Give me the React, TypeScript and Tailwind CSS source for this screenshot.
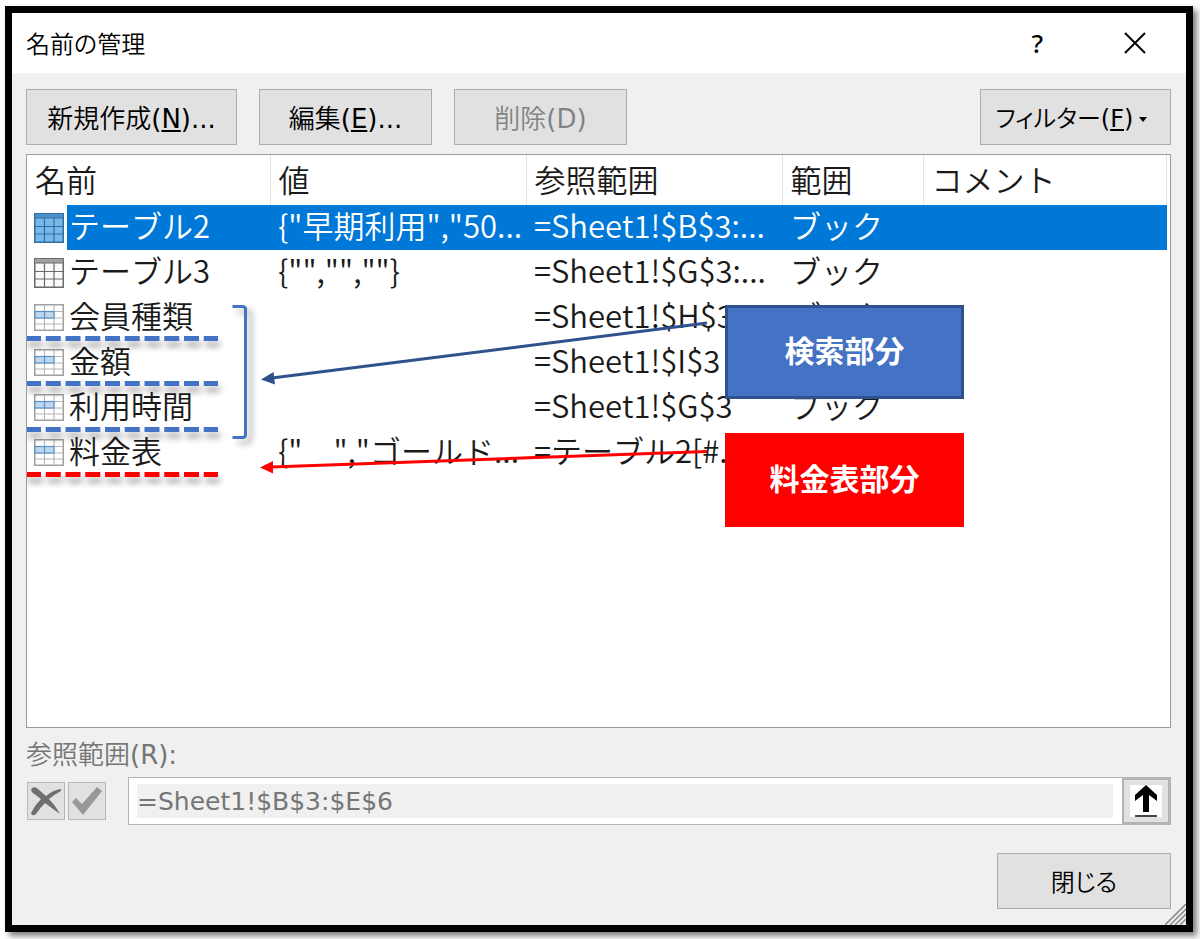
import React, { useState } from "react";
import clsx from "clsx";

interface NameItem {
  name: string;
  value: string;
  refersTo: string;
  kind: "table" | "range";
}

const items: NameItem[] = [
  { name: "テーブル2", value: '{"早期利用","50...', refersTo: "=Sheet1!$B$3:...", kind: "table" },
  { name: "テーブル3", value: '{"","",""}', refersTo: "=Sheet1!$G$3:...", kind: "table" },
  { name: "会員種類", value: "", refersTo: "=Sheet1!$H$3", kind: "range" },
  { name: "金額", value: "", refersTo: "=Sheet1!$I$3", kind: "range" },
  { name: "利用時間", value: "", refersTo: "=Sheet1!$G$3", kind: "range" },
  { name: "料金表", value: '{"　","ゴールド...', refersTo: "=テーブル2[#...", kind: "range" },
];

const columns = [
  { label: "名前", width: "w-[243px]" },
  { label: "値", width: "w-[256px]" },
  { label: "参照範囲", width: "w-[256px]" },
  { label: "範囲", width: "w-[141px]" },
  { label: "コメント", width: "" },
];

const buttonStyles =
  "h-14 border border-[#adadad] bg-[#e1e1e1] pt-1 text-black disabled:text-[#838383] whitespace-nowrap";

const TableIcon = ({ selected }: { selected: boolean }) => {
  const line = selected ? "#2f6ea5" : "#6a6a6a";
  return (
    <svg width="30" height="30" viewBox="0 0 30 30" className="shrink-0" aria-hidden="true">
      <rect x="0.75" y="0.75" width="28.5" height="28.5" fill={selected ? "#7ab8ea" : "#fbfbfb"} stroke={line} strokeWidth="1.5" />
      <rect x="1" y="1" width="28" height="4" fill={selected ? "#4a8fc7" : "#a3a3a3"} />
      <path d="M0 5H30M0 13.5H30M0 21H30M10.5 5V30M20 5V30" stroke={line} strokeWidth="1.2" />
    </svg>
  );
};

const RangeIcon = () => (
  <svg width="30" height="27" viewBox="0 0 30 27" className="shrink-0" aria-hidden="true">
    <rect x="0.75" y="0.75" width="28.5" height="25.5" fill="#fff" stroke="#a0a0a0" strokeWidth="1.5" />
    <path d="M1 7.5H29M1 14H29M1 20H29M10.5 1V26M20 1V26" stroke="#b5b5b5" strokeWidth="1.1" />
    <rect x="1" y="7.5" width="19" height="6.5" fill="#bdd7ee" stroke="#5b92c6" strokeWidth="1.2" />
    <path d="M10.5 7.5V14" stroke="#5b92c6" strokeWidth="1.2" />
  </svg>
);

// access key shown after a button caption
const Hotkey = ({ letter, more }: { letter: string; more?: boolean }) => (
  <span className="font-normal">
    (<u className="underline-offset-2">{letter}</u>){more && "..."}
  </span>
);

// underlines, bracket and arrows drawn over the list
const Annotations = () => (
  <div className="pointer-events-none absolute left-0 top-0">
    <svg width="700" height="350" viewBox="0 0 700 350" fill="none" aria-hidden="true">
      <g className="drop-shadow-[2px_6px_3px_rgba(0,0,0,0.35)]" strokeWidth="5" strokeDasharray="15 4.75">
        <path d="M-1 183.5H191" stroke="#4472c4" />
        <path d="M-1 228.5H191" stroke="#4472c4" />
        <path d="M-1 274.5H191" stroke="#4472c4" />
        <path d="M-1 319.5H191" stroke="#ff0000" />
      </g>
      <path
        d="M205.500 151.500H215Q218.500 151.500 218.500 154V280Q218.500 282.500 215 282.500H205.500"
        stroke="#4472c4"
        strokeWidth="3"
        className="drop-shadow-[5px_5px_3px_rgba(0,0,0,0.35)]"
      />
      <path d="M680 168L245 223" stroke="#2f528f" strokeWidth="3" />
      <path d="M234 224.500L246.500 217L248 229.500Z" fill="#2f528f" />
      <path d="M680 296.500L245 312" stroke="#ff0000" strokeWidth="3" />
      <path d="M233 312.500L246 306V318.500Z" fill="#ff0000" />
    </svg>
    <div className="absolute left-[698px] top-[150px] flex h-[94px] w-[239px] items-center justify-center border-[3px] border-[#2f528f] bg-[#4472c4] pb-[6px] text-[30px] font-bold text-white">
      検索部分
    </div>
    <div className="absolute left-[698px] top-[278px] flex h-[94px] w-[239px] items-center justify-center bg-[#ff0000] pb-[6px] text-[30px] font-bold text-white">
      料金表部分
    </div>
  </div>
);

const App = () => {
  const [selected, setSelected] = useState(0);

  return (
    <div className="flex min-h-screen flex-col bg-white pb-[7px] pl-[5px] pr-[7px] pt-[6px] font-['DejaVu_Sans','Noto_Sans_CJK_JP',sans-serif] text-[26px] leading-9">
      <main className="relative flex flex-1 flex-col border-[7px] border-black bg-[#f0f0f0] shadow-[4px_4px_6px_rgba(0,0,0,0.5)]">
        {/* title bar */}
        <header className="flex h-[60px] items-center justify-between bg-white pl-[14px] pr-[39px]">
          <h1 className="font-['Noto_Sans_CJK_JP',sans-serif] text-[24px] font-[350] [font-feature-settings:'palt']">
            名前の管理
          </h1>
          <div className="flex items-center gap-20">
            <button type="button" aria-label="ヘルプ" className="font-['Noto_Sans',sans-serif] text-[26px] font-medium">
              ?
            </button>
            <button type="button" aria-label="閉じる">
              <svg width="24" height="24" viewBox="0 0 24 24" stroke="#000" strokeWidth="2" aria-hidden="true">
                <path d="M2 2L22 22M22 2L2 22" />
              </svg>
            </button>
          </div>
        </header>

        <div className="flex flex-1 flex-col pb-4 pl-[14px] pr-[15px] pt-4">
          {/* toolbar */}
          <div className="mb-[9px] flex items-center font-[350]">
            <button type="button" className={clsx(buttonStyles, "mr-[22px] w-[211px]")}>
              新規作成
              <Hotkey letter="N" more />
            </button>
            <button type="button" className={clsx(buttonStyles, "mr-[22px] w-[173px]")}>
              編集
              <Hotkey letter="E" more />
            </button>
            <button type="button" disabled className={clsx(buttonStyles, "w-[173px]")}>
              削除<span className="font-normal">(D)</span>
            </button>
            <button
              type="button"
              className={clsx(buttonStyles, "ml-auto flex w-[191px] items-center justify-center gap-[6px] pr-2")}
            >
              <span className="text-[24px] [font-feature-settings:'palt']">
                フィルター
                <Hotkey letter="F" />
              </span>
              <svg width="8" height="5" viewBox="0 0 8 5" aria-hidden="true">
                <path d="M0 0H8L4 5Z" />
              </svg>
            </button>
          </div>

          {/* name list */}
          <div className="relative flex-1 border border-[#9a9aa5] bg-white pr-[3px] font-['Noto_Sans_CJK_JP',sans-serif] text-[31px] font-[350] text-[#1a1a1a] [font-kerning:none]">
            <table className="w-full table-fixed border-collapse">
              <thead>
                <tr className="h-[50px]">
                  {columns.map((column) => (
                    <th
                      key={column.label}
                      scope="col"
                      className={clsx("border-r border-[#e3e3e3] p-0 pb-[2px] pl-2 text-left font-[350]", column.width)}
                    >
                      {column.label}
                    </th>
                  ))}
                </tr>
              </thead>
              <tbody>
                {items.map((item, index) => {
                  const active = index === selected;
                  const fill = active && "bg-[#0078d7] text-white";
                  return (
                    <tr key={item.name} className="h-[45px] whitespace-pre" onClick={() => setSelected(index)}>
                      <td className="p-0">
                        <div className="flex h-[45px] items-center pl-[7px]">
                          {item.kind === "table" ? <TableIcon selected={active} /> : <RangeIcon />}
                          <span className={clsx("ml-[3px] flex h-full flex-1 items-center pb-[5px] pl-[2px]", fill)}>
                            {item.name}
                          </span>
                        </div>
                      </td>
                      <td className={clsx("p-0 pb-[5px] pl-2", fill)}>{item.value}</td>
                      <td className={clsx("p-0 pb-[5px] pl-2", fill)}>{item.refersTo}</td>
                      <td className={clsx("p-0 pb-[5px] pl-2", fill)}>ブック</td>
                      <td className={clsx("p-0", fill)}></td>
                    </tr>
                  );
                })}
              </tbody>
            </table>
            <Annotations />
          </div>

          {/* reference editor */}
          <label htmlFor="refers-to" className="flex h-[49px] items-center pt-1 font-[350] text-[#767676]">
            参照範囲<span className="font-normal">(R):</span>
          </label>
          <div className="flex h-12 items-center">
            <button
              type="button"
              disabled
              aria-label="キャンセル"
              className="ml-[1px] flex size-[38px] items-center justify-center border border-[#b8b8b8] bg-[#e1e1e1]"
            >
              <svg width="32" height="30" viewBox="0 0 32 30" className="shrink-0" aria-hidden="true">
                <path d="M2 2Q5 0 8 3L16 10Q23 4 31 3V5Q25 8 19 13Q26 20 30 28Q23 23 15 17Q10 22 6 28Q2 31 1 27Q5 19 11 13L3 7Q0 5 2 2Z" fill="#6f6f6f" />
              </svg>
            </button>
            <button
              type="button"
              disabled
              aria-label="入力"
              className="ml-[3px] flex size-[38px] items-center justify-center border border-[#b8b8b8] bg-[#e1e1e1]"
            >
              <svg width="32" height="30" viewBox="0 0 32 30" className="shrink-0" aria-hidden="true">
                <path d="M1 16L5 12L11 18L26 1L31 5L12 29Z" fill="#989898" />
              </svg>
            </button>
            <div className="ml-[22px] flex h-12 flex-1 border border-[#b4b4bc] bg-white">
              <input
                id="refers-to"
                type="text"
                disabled
                defaultValue="=Sheet1!$B$3:$E$6"
                className="my-[6px] ml-2 mr-[9px] min-w-0 flex-1 bg-[#f0f0f0] pt-[2px] text-[25px] text-[#767676]"
              />
              <button
                type="button"
                aria-label="範囲の選択"
                className="flex w-12 items-center justify-center border-2 border-[#b4b4b8] bg-[#e1e1e1]"
              >
                <svg width="32" height="32" viewBox="0 0 32 32" aria-hidden="true">
                  <path d="M0 0H32V32H0Z" fill="#fff" />
                  <path d="M16 0L27 10V16L19 10V27H13V10L5 16V10Z" fill="#000" />
                  <path d="M5 31H27" stroke="#444" strokeWidth="2" />
                </svg>
              </button>
            </div>
          </div>

          <div className="mt-7 flex justify-end">
            <button
              type="button"
              className={clsx(buttonStyles, "w-[174px] text-[24px] font-[350] [font-feature-settings:'palt']")}
            >
              閉じる
            </button>
          </div>
        </div>

        {/* resize grip */}
        <svg width="21" height="21" viewBox="0 0 21 21" className="absolute bottom-0 right-0" aria-hidden="true">
          <path d="M0 21L21 0M5 21L21 5M10 21L21 10M15 21L21 15" stroke="#8f8f8f" strokeWidth="1.6" />
        </svg>
      </main>
    </div>
  );
};

export default App;
